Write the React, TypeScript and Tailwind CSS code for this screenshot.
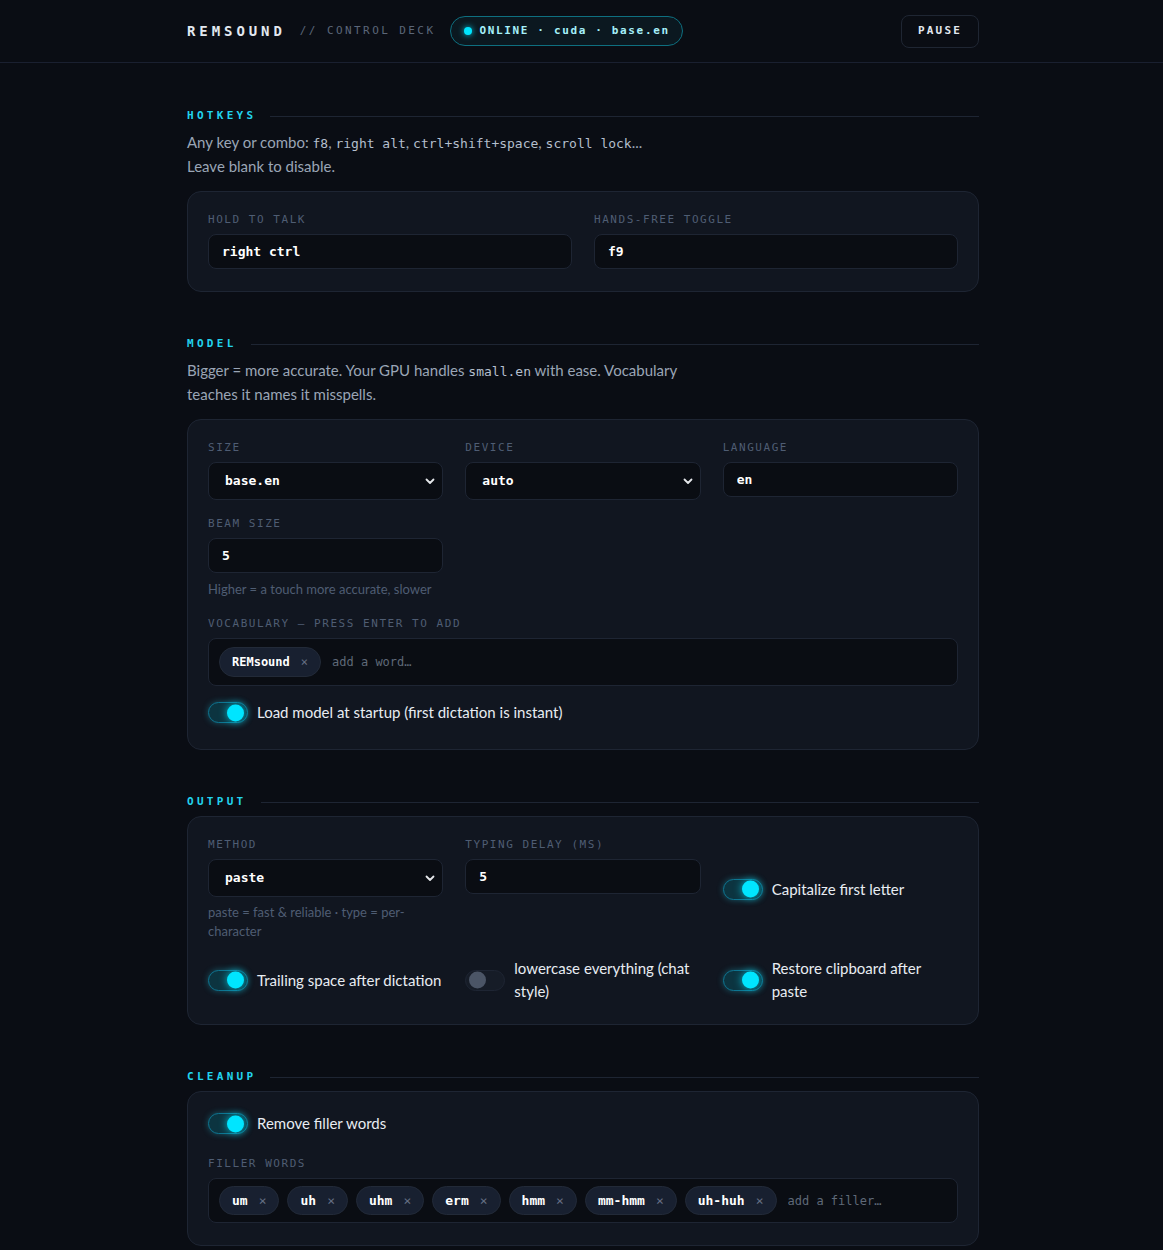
import { useState, type ReactNode } from "react";

const mono = "font-['DejaVu_Sans_Mono',monospace]";

function SectionHeading({ title }: { title: string }) {
  return (
    <div className="flex items-center gap-[14px] mb-2">
      <h2 className={`${mono} text-[11px] leading-3 font-bold tracking-[0.3em] text-[#22d3ee]`}>
        {title}
      </h2>
      <div className="h-px flex-1 bg-[#1e2533]" />
    </div>
  );
}

function Label({ children }: { children: ReactNode }) {
  return (
    <div className={`${mono} text-[11px] leading-4 tracking-[0.14em] text-[#4f5d73] uppercase mb-[6px]`}>
      {children}
    </div>
  );
}

function TextInput({ value }: { value: string }) {
  return (
    <input
      defaultValue={value}
      className={`${mono} w-full h-[35px] rounded-lg border border-[#1e2533] bg-[#0a0d13] px-[13px] text-[13px] font-bold text-white outline-none`}
    />
  );
}

function Select({ value, options }: { value: string; options: string[] }) {
  return (
    <div className="relative">
      <select
        defaultValue={value}
        className={`${mono} w-full h-[38px] appearance-none rounded-lg border border-[#1e2533] bg-[#0a0d13] pl-4 pr-8 text-[13px] font-bold text-white outline-none`}
      >
        {options.map((o) => (
          <option key={o}>{o}</option>
        ))}
      </select>
      <svg
        className="pointer-events-none absolute right-[8px] top-1/2 -translate-y-1/2"
        width="10"
        height="10"
        viewBox="0 0 10 10"
        fill="none"
      >
        <path d="M1.5 3.5 5 7l3.5-3.5" stroke="#e5e7eb" strokeWidth="1.8" strokeLinecap="round" strokeLinejoin="round" />
      </svg>
    </div>
  );
}

function Toggle({ on, label }: { on: boolean; label: string }) {
  const [checked, setChecked] = useState(on);
  return (
    <label className="flex items-center gap-[9px] cursor-pointer">
      <button
        type="button"
        onClick={() => setChecked(!checked)}
        className={
          checked
            ? "relative shrink-0 w-10 h-[21px] rounded-full border border-[#0e7490] bg-[#0c3440] shadow-[0_0_6px_rgba(34,211,238,0.35)]"
            : "relative shrink-0 w-10 h-[21px] rounded-full border border-[#1e2533] bg-[#161c27]"
        }
      >
        <span
          className={
            checked
              ? "absolute right-[3px] top-1/2 -translate-y-1/2 w-[17px] h-[17px] rounded-full bg-[#00e5ff] shadow-[0_0_8px_rgba(0,229,255,0.8)]"
              : "absolute left-[3px] top-1/2 -translate-y-1/2 w-[17px] h-[17px] rounded-full bg-[#4b5566]"
          }
        />
      </button>
      <span className="text-[15px] leading-[23px] text-[#e8ecf2]">{label}</span>
    </label>
  );
}

// vocabulary chips are a touch smaller and taller than the filler ones
function TagBox({ tags, placeholder, tall }: { tags: string[]; placeholder: string; tall?: boolean }) {
  return (
    <div
      className={
        tall
          ? "flex flex-wrap items-center gap-2 min-h-[48px] rounded-lg border border-[#1e2533] bg-[#0a0d13] px-[10px] py-[8px]"
          : "flex flex-wrap items-center gap-2 min-h-[45px] rounded-lg border border-[#1e2533] bg-[#0a0d13] px-[10px] py-[7px]"
      }
    >
      {tags.map((t) => (
        <span
          key={t}
          className={`${mono} flex items-center gap-[11px] ${tall ? "h-[30px] text-[12px]" : "h-[29px] text-[13px]"} rounded-full border border-[#222a38] bg-[#182030] px-3 font-bold text-white`}
        >
          {t}
          <span className="font-normal text-[#667085]">×</span>
        </span>
      ))}
      <input
        placeholder={placeholder}
        className={`${mono} ml-[3px] flex-1 min-w-[120px] bg-transparent text-[12px] text-white placeholder:text-[#5f6978] outline-none`}
      />
    </div>
  );
}

function Card({ children, bottom }: { children: ReactNode; bottom?: string }) {
  return (
    <div className={`rounded-[14px] border border-[#1e2533] bg-[#111620] px-5 pt-5 ${bottom ?? "pb-[22px]"}`}>
      {children}
    </div>
  );
}

function Code({ children }: { children: ReactNode }) {
  return <code className={`${mono} text-[13px] leading-none text-[#b4bfcd]`}>{children}</code>;
}

export default function App() {
  return (
    <div className="min-h-screen bg-[#0a0d14] font-['Lato',sans-serif] text-[#e5e7eb]">
      <header className="border-b border-[#1a2030]">
        <div className="max-w-[795px] mx-auto pl-[3px] h-[62px] flex items-center justify-between">
          <div className="flex items-center">
            <span className={`${mono} text-[14px] font-bold tracking-[0.28em] text-[#e2e8f0]`}>REMSOUND</span>
            <span className={`${mono} ml-[14px] text-[11px] tracking-[0.22em] text-[#5b6678]`}>// CONTROL DECK</span>
            <span className="ml-[15px] flex items-center gap-[7px] h-[30px] rounded-full border border-[#0e6f80] bg-[#0b1820] pl-[13px] pr-[12px]">
              <span className="w-2 h-2 rounded-full bg-[#00e5ff] shadow-[0_0_6px_rgba(0,229,255,0.9)]" />
              <span className={`${mono} text-[11px] font-bold tracking-[0.15em] text-[#a5f0fa]`}>
                ONLINE · cuda · base.en
              </span>
            </span>
          </div>
          <button
            className={`${mono} h-[33px] w-[78px] rounded-lg border border-[#1f2633] text-[11px] font-bold tracking-[0.2em] text-[#e2e8f0]`}
          >
            PAUSE
          </button>
        </div>
      </header>

      <main className="max-w-[795px] mx-auto pl-[3px] pt-[47px] pb-16 flex flex-col gap-[46px]">
        <section>
          <SectionHeading title="HOTKEYS" />
          <p className="max-w-[500px] text-[15px] leading-6 text-[#9aa5b6] mb-[13px]">
            Any key or combo: <Code>f8</Code>, <Code>right alt</Code>, <Code>ctrl+shift+space</Code>,{" "}
            <Code>scroll lock</Code>...
            <br />
            Leave blank to disable.
          </p>
          <Card>
            <div className="grid grid-cols-2 gap-x-[22px]">
              <div>
                <Label>Hold to talk</Label>
                <TextInput value="right ctrl" />
              </div>
              <div>
                <Label>Hands-free toggle</Label>
                <TextInput value="f9" />
              </div>
            </div>
          </Card>
        </section>

        <section>
          <SectionHeading title="MODEL" />
          <p className="max-w-[500px] text-[15px] leading-6 text-[#9aa5b6] mb-[13px]">
            Bigger = more accurate. Your GPU handles <Code>small.en</Code> with ease. Vocabulary teaches it names it
            misspells.
          </p>
          <Card bottom="pb-[25px]">
            <div className="grid grid-cols-3 gap-x-[22px] gap-y-4">
              <div>
                <Label>Size</Label>
                <Select value="base.en" options={["tiny.en", "base.en", "small.en", "medium.en"]} />
              </div>
              <div>
                <Label>Device</Label>
                <Select value="auto" options={["auto", "cuda", "cpu"]} />
              </div>
              <div>
                <Label>Language</Label>
                <TextInput value="en" />
              </div>
              <div>
                <Label>Beam size</Label>
                <TextInput value="5" />
                <div className="mt-[7px] text-[13px] leading-[19px] text-[#4f5d73]">
                  Higher = a touch more accurate, slower
                </div>
              </div>
            </div>
            <div className="mt-[17px]">
              <Label>Vocabulary — press enter to add</Label>
              <TagBox tall tags={["REMsound"]} placeholder="add a word…" />
            </div>
            <div className="mt-[15px]">
              <Toggle on label="Load model at startup (first dictation is instant)" />
            </div>
          </Card>
        </section>

        <section>
          <SectionHeading title="OUTPUT" />
          <Card bottom="pb-[21px]">
            <div className="grid grid-cols-3 gap-x-[22px] gap-y-4">
              <div>
                <Label>Method</Label>
                <Select value="paste" options={["paste", "type"]} />
                <div className="mt-[6px] text-[13px] leading-[19px] text-[#4f5d73]">
                  paste = fast &amp; reliable · type = per-character
                </div>
              </div>
              <div>
                <Label>Typing delay (ms)</Label>
                <TextInput value="5" />
              </div>
              <div className="self-center">
                <Toggle on label="Capitalize first letter" />
              </div>
              <div className="self-center">
                <Toggle on label="Trailing space after dictation" />
              </div>
              <div className="self-center">
                <Toggle on={false} label="lowercase everything (chat style)" />
              </div>
              <div className="self-center">
                <Toggle on label="Restore clipboard after paste" />
              </div>
            </div>
          </Card>
        </section>

        <section>
          <SectionHeading title="CLEANUP" />
          <Card>
            <Toggle on label="Remove filler words" />
            <div className="mt-[21px]">
              <Label>Filler words</Label>
              <TagBox tags={["um", "uh", "uhm", "erm", "hmm", "mm-hmm", "uh-huh"]} placeholder="add a filler…" />
            </div>
          </Card>
        </section>
      </main>
    </div>
  );
}
